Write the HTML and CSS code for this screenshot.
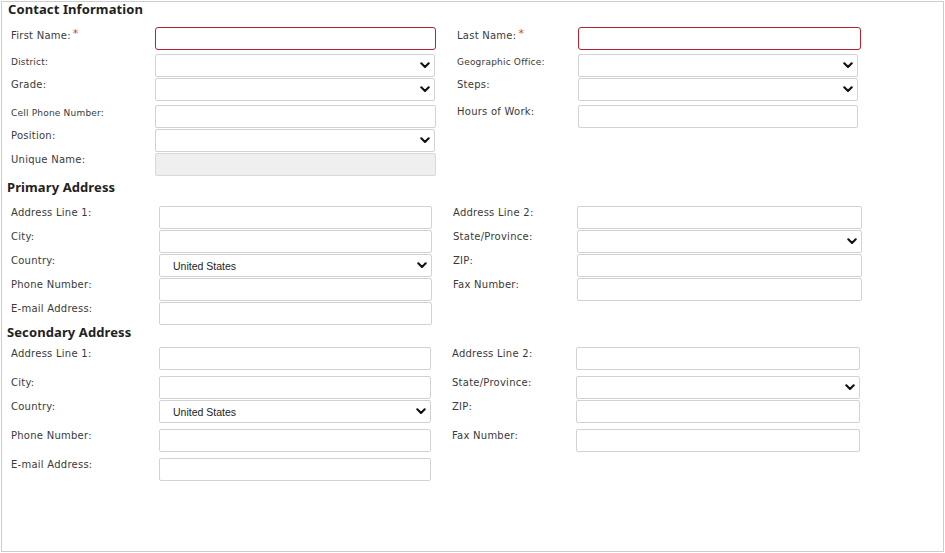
FILE: index.html
```html
<!doctype html>
<html lang="en">
  <head>
    <meta charset="UTF-8" />
    <meta name="viewport" content="width=device-width, initial-scale=1.0" />
    <title>Contact Information</title>
    <link rel="stylesheet" href="styles.css">
  </head>
  <body>
    <div class="panel">

      <!-- Contact -->
      <section class="group contact">
        <h3 class="title">Contact Information</h3>

        <div class="row">
          <label class="lbl">First Name:<span class="req">*</span></label>
          <div class="cell"><input class="ctl required" type="text"></div>
          <label class="lbl lbl-r">Last Name:<span class="req">*</span></label>
          <div class="cell cell-r"><input class="ctl required" type="text"></div>
        </div>

        <div class="row gap-4">
          <label class="lbl small">District:</label>
          <div class="cell">
            <div class="sel short">
              <select class="ctl"><option></option></select>
              <svg class="chev" viewBox="0 0 10 7"><path d="M1.3 1.3 L5 5 L8.7 1.3"/></svg>
            </div>
          </div>
          <label class="lbl lbl-r small">Geographic Office:</label>
          <div class="cell cell-r">
            <div class="sel short">
              <select class="ctl"><option></option></select>
              <svg class="chev" viewBox="0 0 10 7"><path d="M1.3 1.3 L5 5 L8.7 1.3"/></svg>
            </div>
          </div>
        </div>

        <div class="row">
          <label class="lbl">Grade:</label>
          <div class="cell">
            <div class="sel short">
              <select class="ctl"><option></option></select>
              <svg class="chev" viewBox="0 0 10 7"><path d="M1.3 1.3 L5 5 L8.7 1.3"/></svg>
            </div>
          </div>
          <label class="lbl lbl-r">Steps:</label>
          <div class="cell cell-r">
            <div class="sel short">
              <select class="ctl"><option></option></select>
              <svg class="chev" viewBox="0 0 10 7"><path d="M1.3 1.3 L5 5 L8.7 1.3"/></svg>
            </div>
          </div>
        </div>

        <div class="row gap-4">
          <label class="lbl small">Cell Phone Number:</label>
          <div class="cell"><input class="ctl" type="text"></div>
          <label class="lbl lbl-r">Hours of Work:</label>
          <div class="cell cell-r"><input class="ctl short" type="text"></div>
        </div>

        <div class="row">
          <label class="lbl">Position:</label>
          <div class="cell">
            <div class="sel short">
              <select class="ctl"><option></option></select>
              <svg class="chev" viewBox="0 0 10 7"><path d="M1.3 1.3 L5 5 L8.7 1.3"/></svg>
            </div>
          </div>
        </div>

        <div class="row">
          <label class="lbl">Unique Name:</label>
          <div class="cell"><input class="ctl" type="text" disabled></div>
        </div>
      </section>

      <!-- Primary address -->
      <section class="group primary">
        <h3 class="title">Primary Address</h3>

        <div class="row">
          <label class="lbl">Address Line 1:</label>
          <div class="cell"><input class="ctl" type="text"></div>
          <label class="lbl lbl-r">Address Line 2:</label>
          <div class="cell cell-r"><input class="ctl" type="text"></div>
        </div>

        <div class="row">
          <label class="lbl">City:</label>
          <div class="cell"><input class="ctl" type="text"></div>
          <label class="lbl lbl-r">State/Province:</label>
          <div class="cell cell-r">
            <div class="sel">
              <select class="ctl"><option></option></select>
              <svg class="chev" viewBox="0 0 10 7"><path d="M1.3 1.3 L5 5 L8.7 1.3"/></svg>
            </div>
          </div>
        </div>

        <div class="row">
          <label class="lbl">Country:</label>
          <div class="cell">
            <div class="sel">
              <select class="ctl"><option>United States</option></select>
              <svg class="chev" viewBox="0 0 10 7"><path d="M1.3 1.3 L5 5 L8.7 1.3"/></svg>
            </div>
          </div>
          <label class="lbl lbl-r">ZIP:</label>
          <div class="cell cell-r"><input class="ctl" type="text"></div>
        </div>

        <div class="row">
          <label class="lbl">Phone Number:</label>
          <div class="cell"><input class="ctl" type="text"></div>
          <label class="lbl lbl-r">Fax Number:</label>
          <div class="cell cell-r"><input class="ctl" type="text"></div>
        </div>

        <div class="row">
          <label class="lbl">E-mail Address:</label>
          <div class="cell"><input class="ctl" type="text"></div>
        </div>
      </section>

      <!-- Secondary address -->
      <section class="group secondary">
        <h3 class="title">Secondary Address</h3>

        <div class="row">
          <label class="lbl">Address Line 1:</label>
          <div class="cell"><input class="ctl" type="text"></div>
          <label class="lbl lbl-r">Address Line 2:</label>
          <div class="cell cell-r"><input class="ctl" type="text"></div>
        </div>

        <div class="row gap-6">
          <label class="lbl">City:</label>
          <div class="cell"><input class="ctl" type="text"></div>
          <label class="lbl lbl-r">State/Province:</label>
          <div class="cell cell-r">
            <div class="sel">
              <select class="ctl"><option></option></select>
              <svg class="chev" viewBox="0 0 10 7"><path d="M1.3 1.3 L5 5 L8.7 1.3"/></svg>
            </div>
          </div>
        </div>

        <div class="row">
          <label class="lbl">Country:</label>
          <div class="cell">
            <div class="sel">
              <select class="ctl"><option>United States</option></select>
              <svg class="chev" viewBox="0 0 10 7"><path d="M1.3 1.3 L5 5 L8.7 1.3"/></svg>
            </div>
          </div>
          <label class="lbl lbl-r">ZIP:</label>
          <div class="cell cell-r"><input class="ctl" type="text"></div>
        </div>

        <div class="row gap-6">
          <label class="lbl">Phone Number:</label>
          <div class="cell"><input class="ctl" type="text"></div>
          <label class="lbl lbl-r">Fax Number:</label>
          <div class="cell cell-r"><input class="ctl" type="text"></div>
        </div>

        <div class="row gap-6">
          <label class="lbl">E-mail Address:</label>
          <div class="cell"><input class="ctl" type="text"></div>
        </div>
      </section>

    </div>
  </body>
</html>
```

FILE: styles.css
```css
body {
  margin: 0;
  padding: 1px 0 0 1px;
  background: #fff;
  font-family: "DejaVu Sans", Verdana, sans-serif;
  color: #333;
}

.panel {
  box-sizing: border-box;
  width: 943px;
  height: 551px;
  border: 1px solid #cdcdcd;
}

/* column widths per section */
.contact {
  --l1: 153px;
  --c1: 281px;
  --l2: 142px;
  --c2: 283px;
}

.primary {
  --l1: 157px;
  --c1: 273px;
  --l2: 145px;
  --c2: 285px;
}

.secondary {
  --l1: 157px;
  --c1: 272px;
  --l2: 145px;
  --c2: 284px;
}

.title {
  margin: 0;
  padding-left: 5px;
  font-family: "Noto Sans", sans-serif;
  font-size: 13px;
  line-height: 14px;
  font-weight: 700;
  letter-spacing: 0.1px;
  color: #222;
}

.contact .title {
  padding-left: 6px;
  margin-bottom: 11px;
}

.primary .title {
  margin: 4px 0 12px 0;
}

.secondary .title {
  margin: 0 0 8px 0;
}

.row {
  display: flex;
  height: 23px;
  margin-top: 1px;
}

.title + .row {
  margin-top: 0;
}

.row.gap-4 {
  margin-top: 4px;
}

.row.gap-6 {
  margin-top: 6px;
}

.lbl {
  box-sizing: border-box;
  flex: none;
  width: var(--l1);
  padding: 1px 0 0 9px;
  font-size: 10px;
  line-height: 12px;
  letter-spacing: 0.25px;
  color: #3a3a3a;
  white-space: nowrap;
}

.lbl.small {
  font-size: 9px;
  letter-spacing: 0.2px;
  padding-top: 2px;
}

.lbl-r {
  width: var(--l2);
  padding-left: 21px;
}

.req {
  color: #dc3b30;
  font-size: 11px;
  margin-left: 2px;
  vertical-align: 2px;
}

.cell {
  flex: none;
  width: var(--c1);
}

.cell-r {
  width: var(--c2);
}

.ctl {
  box-sizing: border-box;
  display: block;
  width: 100%;
  height: 23px;
  margin: 0;
  padding: 0 4px;
  border: 1px solid #d2d2d2;
  border-radius: 2px;
  background: #fff;
  font-family: "Liberation Sans", Arial, sans-serif;
  font-size: 10.5px;
  color: #222;
  outline: none;
}

.ctl.required {
  border-color: #b5232c;
  border-radius: 3px;
}

.ctl:disabled {
  background: #efefef;
  border-color: #d8d8d8;
}

.ctl.short,
.sel.short {
  width: 280px;
}

.sel {
  position: relative;
  width: 100%;
}

select.ctl {
  -webkit-appearance: none;
  appearance: none;
  padding: 0 22px 0 13px;
}

.chev {
  position: absolute;
  right: 5px;
  top: 8px;
  width: 10px;
  height: 7px;
  pointer-events: none;
}

.chev path {
  fill: none;
  stroke: #111;
  stroke-width: 2.1;
  stroke-linecap: round;
  stroke-linejoin: round;
}
```
